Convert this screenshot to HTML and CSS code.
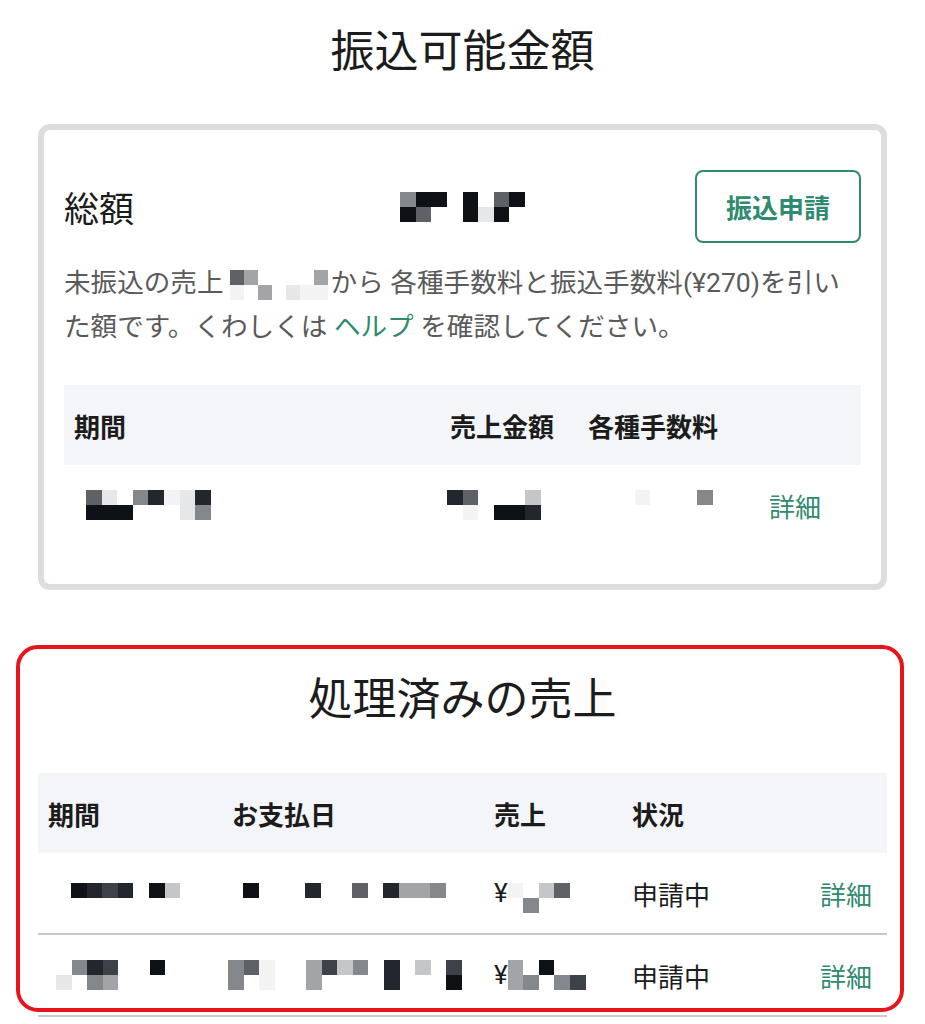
FILE: index.html
```html
<!DOCTYPE html>
<html lang="ja">
<head>
  <meta charset="UTF-8">
  <title>振込可能金額</title>
  <link rel="stylesheet" href="styles.css">
</head>
<body>
  <h1 class="title">振込可能金額</h1>

  <!-- 振込可能金額カード -->
  <div class="card">
    <div class="card-head">
      <span class="total-label">総額</span>
      <span class="mosaic">
        <i class="k5"></i><i class="k1"></i>
        <i class="k1"></i><i class="k4"></i>
        <i class="k1"></i><i></i>
        <i></i><i></i>
        <i class="k1"></i><i class="k1"></i>
        <i></i><i class="k8"></i>
        <i class="k4"></i><i class="k1"></i>
        <i class="k1"></i><i></i>
      </span>
      <button class="btn-apply">振込申請</button>
    </div>

    <p class="note">未振込の売上<span class="mosaic fine">
        <i class="k4"></i><i class="k9"></i>
        <i class="k6"></i><i></i>
        <i></i><i class="k6"></i>
        <i></i><i></i>
        <i></i><i class="k8"></i>
        <i></i><i class="k9"></i>
        <i class="k6"></i><i class="k9"></i>
      </span>から 各種手数料と振込手数料(¥270)を引い<br>た額です。くわしくは <a href="#" class="link">ヘルプ</a> を確認してください。</p>

    <div class="grid t1">
      <div class="row head">
        <div class="cell">期間</div>
        <div class="cell">売上金額</div>
        <div class="cell">各種手数料</div>
        <div class="cell"></div>
      </div>
      <div class="row">
        <div class="cell">
          <span class="mosaic nudge-12">
            <i class="k4"></i><i class="k1"></i>
            <i class="k8"></i><i class="k1"></i>
            <i></i><i class="k1"></i>
            <i class="k5"></i><i></i>
            <i class="k2"></i><i></i>
            <i class="k9"></i><i></i>
            <i class="k8"></i><i class="k8"></i>
            <i class="k2"></i><i class="k5"></i>
          </span>
        </div>
        <div class="cell">
          <span class="mosaic nudge-n3">
            <i class="k2"></i><i></i>
            <i class="k4"></i><i class="k9"></i>
            <i></i><i></i>
            <i></i><i class="k1"></i>
            <i></i><i class="k1"></i>
            <i class="k7"></i><i class="k2"></i>
          </span>
        </div>
        <div class="cell">
          <span class="mosaic">
            <i></i><i></i>
            <i></i><i></i>
            <i></i><i></i>
            <i class="k9"></i><i></i>
            <i></i><i></i>
            <i></i><i></i>
            <i></i><i></i>
            <i class="k5"></i><i></i>
          </span>
        </div>
        <div class="cell"><a href="#" class="link">詳細</a></div>
      </div>
    </div>
  </div>

  <!-- 処理済みの売上 -->
  <div class="sales">
    <h2 class="title">処理済みの売上</h2>

    <div class="grid t2">
      <div class="row head">
        <div class="cell">期間</div>
        <div class="cell">お支払日</div>
        <div class="cell">売上</div>
        <div class="cell">状況</div>
        <div class="cell"></div>
      </div>
      <div class="row line">
        <div class="cell">
          <span class="mosaic low nudge-23">
            <i class="k1"></i><i></i>
            <i class="k2"></i><i></i>
            <i class="k3"></i><i></i>
            <i class="k2"></i><i></i>
            <i></i><i></i>
            <i class="k1"></i><i></i>
            <i class="k7"></i><i></i>
          </span>
        </div>
        <div class="cell">
          <span class="mosaic low nudge-11">
            <i class="k1"></i><i></i>
            <i></i><i></i>
            <i></i><i></i>
            <i></i><i></i>
            <i class="k2"></i><i></i>
            <i></i><i></i>
            <i></i><i></i>
            <i class="k4"></i><i></i>
            <i></i><i></i>
            <i class="k2"></i><i></i>
            <i class="k6"></i><i></i>
            <i class="k6"></i><i></i>
            <i class="k5"></i><i></i>
          </span>
        </div>
        <div class="cell">¥<span class="mosaic low">
            <i class="k9"></i><i></i>
            <i></i><i class="k5"></i>
            <i class="k7"></i><i></i>
            <i class="k4"></i><i></i>
          </span></div>
        <div class="cell">申請中</div>
        <div class="cell end"><a href="#" class="link">詳細</a></div>
      </div>
      <div class="row line">
        <div class="cell">
          <span class="mosaic nudge-8">
            <i></i><i class="k8"></i>
            <i class="k5"></i><i></i>
            <i class="k2"></i><i class="k5"></i>
            <i class="k3"></i><i class="k6"></i>
            <i></i><i></i>
            <i></i><i></i>
            <i class="k1"></i><i></i>
          </span>
        </div>
        <div class="cell">
          <span class="mosaic nudge-n4">
            <i class="k5"></i><i class="k5"></i>
            <i class="k4"></i><i></i>
            <i class="k9"></i><i class="k9"></i>
            <i></i><i></i>
            <i></i><i></i>
            <i class="k6"></i><i class="k6"></i>
            <i class="k3"></i><i></i>
            <i class="k7"></i><i></i>
            <i class="k5"></i><i></i>
            <i></i><i></i>
            <i class="k2"></i><i class="k2"></i>
            <i></i><i></i>
            <i class="k7"></i><i></i>
            <i></i><i></i>
            <i class="k3"></i><i class="k1"></i>
          </span>
        </div>
        <div class="cell">¥<span class="mosaic">
            <i class="k6"></i><i class="k6"></i>
            <i></i><i class="k5"></i>
            <i class="k1"></i><i></i>
            <i></i><i class="k5"></i>
            <i></i><i class="k3"></i>
          </span></div>
        <div class="cell">申請中</div>
        <div class="cell end"><a href="#" class="link">詳細</a></div>
      </div>
    </div>

    <div class="highlight"></div>
  </div>
</body>
</html>
```

FILE: styles.css
```css
body {
  font-family: Roboto, "Noto Sans CJK JP", sans-serif;
  background: #fff;
  color: #1c1c1c;
  margin: 0;
}
.title {
  font-size: 44px;
  font-weight: 400;
  line-height: 60px;
  text-align: center;
  margin: 22px 0 0;
}
.card {
  margin: 42px 38px 0;
  border: 6px solid #dcdddf;
  border-radius: 12px;
  padding: 40px 20px 39px;
}
.card-head {
  display: grid;
  grid-template-columns: 1fr auto 1fr;
  align-items: center;
}
.total-label {
  font-size: 35px;
}
.btn-apply {
  justify-self: end;
  font-family: inherit;
  font-size: 26px;
  font-weight: 700;
  color: #2f8a6f;
  background: #fff;
  border: 2px solid #2f8a6f;
  border-radius: 8px;
  width: 166px;
  height: 73px;
  padding: 0;
}
.note {
  font-size: 26.6px;
  line-height: 44px;
  color: #5a5a5a;
  margin: 18px 0 0;
  white-space: nowrap;
}
.link {
  color: #2f8a6f;
  text-decoration: none;
}
.note .mosaic {
  margin: 0 3px 0 6px;
}

/* mosaic (blurred values) */
.mosaic {
  display: inline-grid;
  grid-template-rows: repeat(2, 15px);
  grid-auto-flow: column;
  grid-auto-columns: 15.6px;
  vertical-align: middle;
}
.mosaic.fine {
  grid-auto-columns: 14px;
}
.mosaic.low {
  margin-top: 10px;
}
.k1 { background: #0e1217; }
.k2 { background: #22272e; }
.k3 { background: #3d4249; }
.k4 { background: #5e6166; }
.k5 { background: #84878b; }
.k6 { background: #a2a4a7; }
.k7 { background: #c5c6c8; }
.k8 { background: #e6e7e8; }
.k9 { background: #f3f3f4; }
.nudge-12 { margin-left: 12px; }
.nudge-23 { margin-left: 23px; }
.nudge-11 { margin-left: 11px; }
.nudge-8 { margin-left: 8px; }
.nudge-n3 { margin-left: -3px; }
.nudge-n4 { margin-left: -4px; }

/* tables */
.grid .row {
  display: grid;
  height: 80px;
  align-items: center;
  font-size: 26px;
}
.grid .cell {
  padding-left: 10px;
  display: flex;
  align-items: center;
  white-space: nowrap;
}
.grid .head {
  background: #f3f5f8;
  font-weight: 700;
}
.t1 {
  margin-top: 36px;
}
.t1 .row {
  grid-template-columns: 376px 138px 181px 1fr;
}

.sales {
  position: relative;
  margin: 80px 38px 0;
}
.t2 {
  margin-top: 43px;
}
.t2 .row {
  grid-template-columns: 184px 262px 138px 1fr auto;
}
.t2 .line {
  height: 80px;
  border-bottom: 2px solid #c8c9cb;
}
.t2 .end {
  padding-right: 15px;
}
.highlight {
  position: absolute;
  top: -25px;
  left: -22px;
  right: -17px;
  bottom: 5px;
  border: 4px solid #e8141c;
  border-radius: 22px;
  pointer-events: none;
}
```
